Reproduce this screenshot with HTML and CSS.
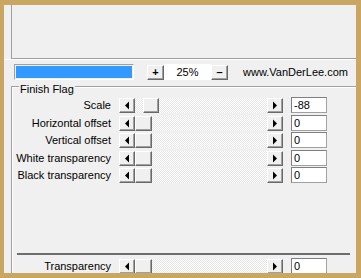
FILE: index.html
```html
<!DOCTYPE html>
<html>
<head>
<meta charset="utf-8">
<link rel="stylesheet" href="styles.css">
</head>
<body>
<div class="win">
  <div class="preview"></div>
  <div class="toolbar">
    <div class="progress"><div class="fill"></div></div>
    <div class="btn zoom-btn plus">+</div>
    <div class="zoom-field">25%</div>
    <div class="btn zoom-btn minus">–</div>
    <div class="site">www.VanDerLee.com</div>
  </div>
  <div class="group">
    <div class="legend">Finish Flag</div>
    <div class="rows">
      <div class="row">
        <div class="label">Scale</div>
        <div class="sb">
          <div class="btn arrow"><svg width="14" height="13" viewBox="0 0 14 13"><polygon points="5,6.5 9,2.5 9,10.5" fill="#000"/></svg></div>
          <div class="track"><div class="btn thumb shifted"></div></div>
          <div class="btn arrow"><svg width="14" height="13" viewBox="0 0 14 13"><polygon points="5,2.5 9,6.5 5,10.5" fill="#000"/></svg></div>
        </div>
        <div class="val">-88</div>
      </div>
      <div class="row">
        <div class="label">Horizontal offset</div>
        <div class="sb">
          <div class="btn arrow"><svg width="14" height="13" viewBox="0 0 14 13"><polygon points="5,6.5 9,2.5 9,10.5" fill="#000"/></svg></div>
          <div class="track"><div class="btn thumb"></div></div>
          <div class="btn arrow"><svg width="14" height="13" viewBox="0 0 14 13"><polygon points="5,2.5 9,6.5 5,10.5" fill="#000"/></svg></div>
        </div>
        <div class="val">0</div>
      </div>
      <div class="row">
        <div class="label">Vertical offset</div>
        <div class="sb">
          <div class="btn arrow"><svg width="14" height="13" viewBox="0 0 14 13"><polygon points="5,6.5 9,2.5 9,10.5" fill="#000"/></svg></div>
          <div class="track"><div class="btn thumb"></div></div>
          <div class="btn arrow"><svg width="14" height="13" viewBox="0 0 14 13"><polygon points="5,2.5 9,6.5 5,10.5" fill="#000"/></svg></div>
        </div>
        <div class="val">0</div>
      </div>
      <div class="row">
        <div class="label">White transparency</div>
        <div class="sb">
          <div class="btn arrow"><svg width="14" height="13" viewBox="0 0 14 13"><polygon points="5,6.5 9,2.5 9,10.5" fill="#000"/></svg></div>
          <div class="track"><div class="btn thumb"></div></div>
          <div class="btn arrow"><svg width="14" height="13" viewBox="0 0 14 13"><polygon points="5,2.5 9,6.5 5,10.5" fill="#000"/></svg></div>
        </div>
        <div class="val">0</div>
      </div>
      <div class="row">
        <div class="label">Black transparency</div>
        <div class="sb">
          <div class="btn arrow"><svg width="14" height="13" viewBox="0 0 14 13"><polygon points="5,6.5 9,2.5 9,10.5" fill="#000"/></svg></div>
          <div class="track"><div class="btn thumb"></div></div>
          <div class="btn arrow"><svg width="14" height="13" viewBox="0 0 14 13"><polygon points="5,2.5 9,6.5 5,10.5" fill="#000"/></svg></div>
        </div>
        <div class="val">0</div>
      </div>
    </div>
    <div class="divider"></div>
    <div class="row bottom-row">
      <div class="label">Transparency</div>
      <div class="sb">
        <div class="btn arrow"><svg width="14" height="13" viewBox="0 0 14 13"><polygon points="5,6.5 9,2.5 9,10.5" fill="#000"/></svg></div>
        <div class="track"><div class="btn thumb"></div></div>
        <div class="btn arrow"><svg width="14" height="13" viewBox="0 0 14 13"><polygon points="5,2.5 9,6.5 5,10.5" fill="#000"/></svg></div>
      </div>
      <div class="val">0</div>
    </div>
  </div>
</div>
</body>
</html>
```
FILE: styles.css
```css
html, body {
  margin: 0;
  padding: 0;
}
body {
  background: #c9a762;
  width: 361px;
  height: 278px;
  overflow: hidden;
  font-family: "Liberation Sans", Arial, sans-serif;
  font-size: 11px;
  color: #000;
}
.win {
  box-sizing: border-box;
  margin: 5px 0 0 4px;
  width: 352px;
  height: 268px;
  background: #f0f0f0;
  overflow: hidden;
  display: flex;
  flex-direction: column;
}
.preview {
  flex: none;
  margin-left: 7px;
  height: 53px;
  border-left: 1px solid #a0a0a0;
  border-bottom: 1px solid #a0a0a0;
}
.toolbar {
  flex: none;
  height: 26px;
  border-top: 1px solid #fff;
  display: flex;
  align-items: flex-start;
}
.progress {
  box-sizing: border-box;
  margin: 4px 0 0 10px;
  width: 120px;
  height: 16px;
  border: 1px solid;
  border-color: #a0a0a0 #ffffff #ffffff #a0a0a0;
  padding: 1px;
}
.fill {
  width: 100%;
  height: 100%;
  background: #3399ff;
}
.btn {
  box-sizing: border-box;
  background: #f0f0f0;
  border-top: 1px solid #ffffff;
  border-left: 1px solid #ffffff;
  border-right: 1px solid #696969;
  border-bottom: 1px solid #696969;
  box-shadow: inset -1px -1px 0 #a0a0a0;
}
.zoom-btn {
  margin-top: 5px;
  width: 17px;
  height: 15px;
  font-weight: bold;
  line-height: 12px;
  text-align: center;
  font-size: 11px;
}
.plus {
  margin-left: 13px;
}
.zoom-field {
  margin-top: 4px;
  width: 47px;
  height: 16px;
  background: #fff;
  line-height: 16px;
  text-align: center;
}
.site {
  margin: 4px 0 0 15px;
  line-height: 16px;
  white-space: nowrap;
}
.group {
  flex: 1;
  margin-left: 7px;
  border-left: 1px solid #a0a0a0;
  border-top: 1px solid #a0a0a0;
  box-shadow: inset 1px 1px 0 #ffffff;
  display: flex;
  flex-direction: column;
}
.legend {
  align-self: flex-start;
  margin: -4px 0 0 7px;
  padding: 0 1px;
  line-height: 13px;
  background: #f0f0f0;
}
.rows {
  margin-top: 1px;
  display: flex;
  flex-direction: column;
  gap: 1.5px;
}
.row {
  flex: none;
  display: flex;
  align-items: flex-start;
  height: 16px;
}
.label {
  width: 99px;
  text-align: right;
  line-height: 16px;
  white-space: nowrap;
}
.sb {
  display: flex;
  margin: 1px 0 0 8px;
  height: 15px;
}
.arrow {
  width: 16px;
  height: 15px;
  display: flex;
  align-items: center;
  justify-content: center;
}
.arrow svg {
  display: block;
}
.track {
  width: 132px;
  height: 15px;
  background: repeating-conic-gradient(#ffffff 0% 25%, #e6e6e6 0% 50%) 0 0 / 2px 2px;
  display: flex;
}
.thumb {
  width: 17px;
  height: 15px;
}
.thumb.shifted {
  width: 16px;
  margin-left: 8px;
}
.val {
  box-sizing: border-box;
  margin-left: 8px;
  width: 36px;
  height: 16px;
  background: #fff;
  border: 1px solid;
  border-color: #7f7f7f #a0a0a0 #a0a0a0 #7f7f7f;
  padding-left: 2px;
  line-height: 14px;
}
.divider {
  flex: none;
  margin: 70px 0 0 5px;
  width: 333px;
  height: 2px;
  background: #6d6d6d;
}
.bottom-row {
  margin-top: 3px;
}
```
